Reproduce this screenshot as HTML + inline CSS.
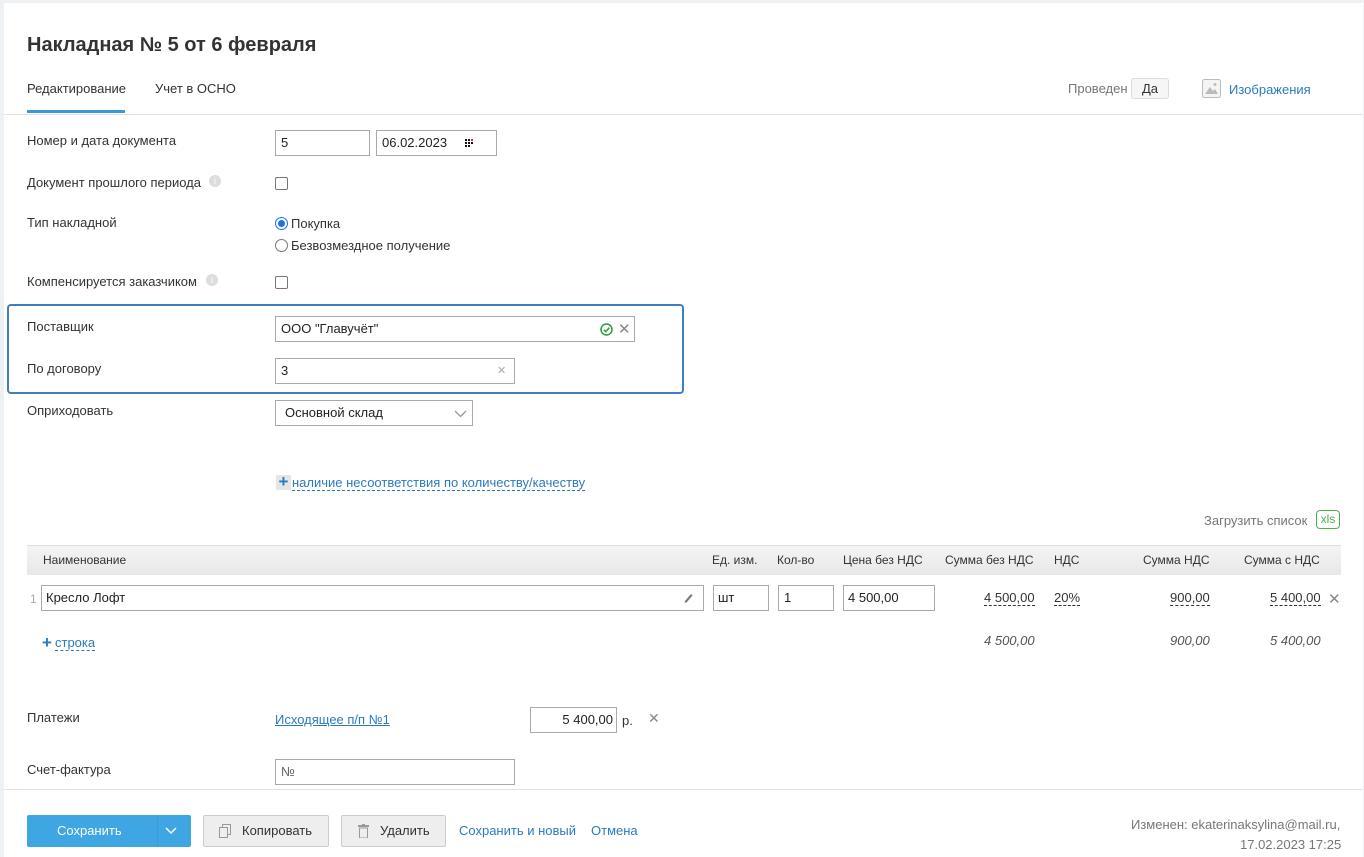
<!DOCTYPE html>
<html><head><meta charset="utf-8">
<style>
*{box-sizing:border-box;margin:0;padding:0}
body{width:1364px;height:857px;background:#eef1f4;font-family:"Liberation Sans",Arial,sans-serif;font-size:13px;color:#333;position:relative;overflow:hidden}
#p{position:absolute;left:4px;top:3px;width:1359px;height:854px;background:#fff}
.a{position:absolute;white-space:nowrap}
.inp{position:absolute;border:1px solid #a9a9a9;background:#fff;height:26px;padding:0 5px;line-height:24px;font-size:13px;color:#222}
.lbl{position:absolute;left:27px;font-size:13px;color:#333}
.link{color:#2a7ac0}
.cb{position:absolute;width:13px;height:13px;border:1px solid #777;border-radius:2px;background:#fff}
.th{position:absolute;top:553px;font-size:12px;color:#333}
.num{position:absolute;font-size:13px;color:#333;border-bottom:1px dashed #333;line-height:15px}
.it{position:absolute;font-style:italic;font-size:13px;color:#555}
.btn{position:absolute;top:815px;height:32px;border:1px solid #ccc;background:#eee;border-radius:2px;font-size:13px;line-height:30px;color:#333}
</style></head><body>
<div id="p"></div>
<div class="a" style="left:27px;top:34px;font-size:20px;font-weight:bold;color:#333">Накладная № 5 от 6 февраля</div>
<div class="a" style="left:27px;top:81px;font-size:13px">Редактирование</div>
<div style="position:absolute;left:27px;top:110px;width:98px;height:3px;background:#3a9ad9"></div>
<div class="a" style="left:155px;top:81px">Учет в ОСНО</div>
<div style="position:absolute;left:4px;top:114px;width:1359px;height:1px;background:#e2e2e2"></div>
<div class="a" style="left:1068px;top:81px;color:#777">Проведен</div>
<div class="a" style="left:1131px;top:78px;width:38px;height:21px;border:1px solid #ddd;border-radius:3px;background:#f6f6f6;text-align:center;line-height:19px;color:#333">Да</div>
<svg class="a" style="left:1202px;top:79px" width="19" height="19"><rect x="0.5" y="0.5" width="18" height="18" rx="2" fill="#f4f4f4" stroke="#bbb"/><path d="M3 15 L8 8 L11 12 L13 10 L16 15 Z" fill="#bbb"/><circle cx="13" cy="5.5" r="1.5" fill="#bbb"/></svg>
<div class="a link" style="left:1229px;top:82px">Изображения</div>

<div class="lbl" style="top:133px">Номер и дата документа</div>
<div class="inp" style="left:275px;top:130px;width:95px">5</div>
<div class="inp" style="left:376px;top:130px;width:121px">06.02.2023</div>
<svg class="a" style="left:465px;top:139px" width="9" height="8"><g fill="#111"><rect x="0" y="0" width="2" height="2"/><rect x="3" y="0" width="2" height="2"/><rect x="6" y="0" width="2" height="2" fill="#d33"/><rect x="0" y="3" width="2" height="2"/><rect x="3" y="3" width="2" height="2"/><rect x="6" y="3" width="2" height="2"/><rect x="0" y="6" width="2" height="2"/><rect x="3" y="6" width="2" height="2"/></g></svg>

<div class="lbl" style="top:175px">Документ прошлого периода</div>
<div class="a" style="left:209px;top:175px;width:12px;height:12px;border-radius:50%;background:#ddd;color:#fff;font-size:9px;text-align:center;line-height:12px">i</div>
<div class="cb" style="left:275px;top:177px"></div>

<div class="lbl" style="top:215px">Тип накладной</div>
<div class="a" style="left:275px;top:217px;width:13px;height:13px;border-radius:50%;border:1px solid #1a73e8;background:#fff"><div style="position:absolute;left:2px;top:2px;width:7px;height:7px;border-radius:50%;background:#1a73e8"></div></div>
<div class="a" style="left:291px;top:216px">Покупка</div>
<div class="a" style="left:275px;top:239px;width:13px;height:13px;border-radius:50%;border:1px solid #777;background:#fff"></div>
<div class="a" style="left:291px;top:238px">Безвозмездное получение</div>

<div class="lbl" style="top:274px">Компенсируется заказчиком</div>
<div class="a" style="left:206px;top:274px;width:12px;height:12px;border-radius:50%;background:#ddd;color:#fff;font-size:9px;text-align:center;line-height:12px">i</div>
<div class="cb" style="left:275px;top:276px"></div>

<div style="position:absolute;left:7px;top:304px;width:677px;height:90px;border:2px solid #3d7fc1;border-radius:4px"></div>
<div class="lbl" style="top:319px">Поставщик</div>
<div class="inp" style="left:275px;top:316px;width:360px">ООО "Главучёт"</div>
<svg class="a" style="left:600px;top:323px" width="13" height="13"><circle cx="6.5" cy="6.5" r="5.5" fill="none" stroke="#2a9d3a" stroke-width="1.5"/><path d="M3.8 6.8 L5.8 8.7 L9.3 4.6" fill="none" stroke="#2a9d3a" stroke-width="1.5"/></svg>
<div class="a" style="left:618px;top:320px;color:#888;font-size:15px">✕</div>
<div class="lbl" style="top:361px">По договору</div>
<div class="inp" style="left:275px;top:358px;width:240px">3</div>
<div class="a" style="left:497px;top:364px;color:#aaa;font-size:11px">✕</div>

<div class="lbl" style="top:403px">Оприходовать</div>
<div class="inp" style="left:275px;top:400px;width:198px;padding-left:9px">Основной склад</div>
<svg class="a" style="left:454px;top:410px" width="13" height="8"><path d="M1 1 L6.5 6.5 L12 1" fill="none" stroke="#999" stroke-width="1.3"/></svg>

<div class="a" style="left:276px;top:475px;width:15px;height:15px;background:#e6e6e6;color:#2a7ac0;font-size:17px;font-weight:bold;line-height:14px;text-align:center">+</div>
<div class="a link" style="left:292px;top:476px;border-bottom:1px dashed #2a7ac0;line-height:14px">наличие несоответствия по количеству/качеству</div>

<div class="a" style="left:1204px;top:513px;color:#777">Загрузить список</div>
<div class="a" style="left:1316px;top:510px;width:24px;height:19px;border:1px solid #4cb050;border-radius:4px;color:#4cb050;font-size:12px;text-align:center;line-height:17px">xls</div>

<div style="position:absolute;left:27px;top:545px;width:1314px;height:30px;background:linear-gradient(#f4f4f4,#e8e8e8);border-top:1px solid #ddd"></div>
<div class="th" style="left:43px">Наименование</div>
<div class="th" style="left:712px">Ед. изм.</div>
<div class="th" style="left:777px">Кол-во</div>
<div class="th" style="left:843px">Цена без НДС</div>
<div class="th" style="left:945px">Сумма без НДС</div>
<div class="th" style="left:1054px">НДС</div>
<div class="th" style="left:1143px">Сумма НДС</div>
<div class="th" style="left:1244px">Сумма с НДС</div>

<div class="a" style="left:30px;top:592px;color:#aaa;font-size:12px">1</div>
<div class="inp" style="left:41px;top:585px;width:663px;padding-left:4px">Кресло Лофт</div>
<svg class="a" style="left:683px;top:592px" width="10" height="11"><path d="M2 9 L8 2 L9.5 3.5 L3.5 10.5 L1.5 10.5 Z" fill="#777"/></svg>
<div class="inp" style="left:713px;top:585px;width:56px;padding-left:4px">шт</div>
<div class="inp" style="left:778px;top:585px;width:56px">1</div>
<div class="inp" style="left:843px;top:585px;width:92px;padding-left:4px">4 500,00</div>
<div class="num" style="left:984px;top:590px">4 500,00</div>
<div class="num" style="left:1054px;top:590px">20%</div>
<div class="num" style="left:1170px;top:590px">900,00</div>
<div class="num" style="left:1270px;top:590px">5 400,00</div>
<div class="a" style="left:1328px;top:590px;color:#888;font-size:15px">✕</div>

<div class="a" style="left:42px;top:633px;color:#2a7ac0;font-size:17px;font-weight:bold">+</div>
<div class="a link" style="left:55px;top:636px;border-bottom:1px dashed #2a7ac0;line-height:14px">строка</div>
<div class="it" style="left:984px;top:633px">4 500,00</div>
<div class="it" style="left:1170px;top:633px">900,00</div>
<div class="it" style="left:1270px;top:633px">5 400,00</div>

<div class="lbl" style="top:710px">Платежи</div>
<div class="a link" style="left:275px;top:712px;text-decoration:underline">Исходящее п/п №1</div>
<div class="inp" style="left:530px;top:707px;width:87px;text-align:right;padding-right:3px">5 400,00</div>
<div class="a" style="left:622px;top:713px">р.</div>
<div class="a" style="left:648px;top:710px;color:#888;font-size:14px">✕</div>

<div class="lbl" style="top:762px">Счет-фактура</div>
<div class="inp" style="left:275px;top:759px;width:240px;color:#666">№</div>

<div style="position:absolute;left:4px;top:789px;width:1359px;height:1px;background:#e2e2e2"></div>

<div class="a" style="left:27px;top:815px;width:164px;height:32px;background:#3ea6e3;border-radius:2px;color:#fff;line-height:32px">
<span style="position:absolute;left:30px">Сохранить</span>
<div style="position:absolute;left:130px;top:0;width:1px;height:32px;background:#3a9bd8"></div>
<svg style="position:absolute;left:138px;top:12px" width="12" height="8"><path d="M1 1 L6 6 L11 1" fill="none" stroke="#fff" stroke-width="1.5"/></svg>
</div>
<div class="btn" style="left:203px;width:126px">
<svg style="position:absolute;left:15px;top:8px" width="12" height="14"><rect x="3.5" y="0.5" width="8" height="10" fill="#eee" stroke="#999"/><rect x="0.5" y="3.5" width="8" height="10" fill="#eee" stroke="#999"/></svg>
<span style="position:absolute;left:38px">Копировать</span></div>
<div class="btn" style="left:341px;width:105px">
<svg style="position:absolute;left:16px;top:8px" width="11" height="14"><rect x="0" y="1" width="11" height="2" fill="#999"/><rect x="1.5" y="4" width="8" height="10" fill="none" stroke="#999"/><rect x="4" y="0" width="3" height="1" fill="#999"/></svg>
<span style="position:absolute;left:38px">Удалить</span></div>
<div class="a link" style="left:459px;top:823px">Сохранить и новый</div>
<div class="a link" style="left:591px;top:823px">Отмена</div>
<div class="a" style="left:1131px;top:817px;color:#777">Изменен: ekaterinaksylina@mail.ru,</div>
<div class="a" style="left:1240px;top:837px;color:#777">17.02.2023 17:25</div>
</body></html>
